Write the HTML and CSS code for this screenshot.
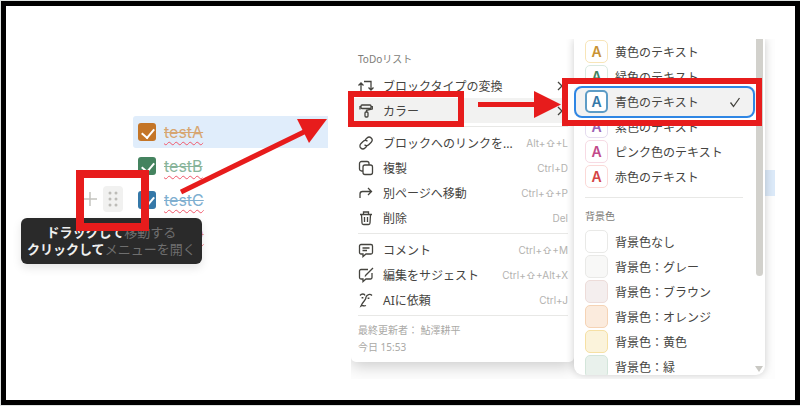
FILE: index.html
```html
<!DOCTYPE html>
<html lang="ja">
<head>
  <meta charset="UTF-8">
  <meta name="viewport" content="width=device-width, initial-scale=1.0">
  <title>ToDoリストのカラー変更</title>
  <link rel="stylesheet" href="styles.css">
</head>
<body>
  <main class="frame">
    <section class="editor">
      <ul class="todos">
        <li class="todo orange active"><input type="checkbox" id="a" checked><label for="a"><s>testA</s></label></li>
        <li class="todo green"><input type="checkbox" id="b" checked><label for="b"><s>testB</s></label></li>
        <li class="todo blue"><input type="checkbox" id="c" checked><label for="c"><s>testC</s></label></li>
        <li class="todo red"><input type="checkbox" id="d" checked><label for="d"><s>testD</s></label></li>
      </ul>
      <div class="block-tools">
        <button type="button" aria-label="追加">
          <svg width="14" height="14" viewBox="0 0 14 14"><path d="M7 0v14M0 7h14" stroke="#c4c3bf" stroke-width="1.5"/></svg>
        </button>
        <button type="button" class="handle" aria-label="メニュー">
          <svg width="10" height="16" viewBox="0 0 10 16" fill="#bdbcb8">
            <circle cx="2" cy="2" r="1.5"/><circle cx="8" cy="2" r="1.5"/>
            <circle cx="2" cy="8" r="1.5"/><circle cx="8" cy="8" r="1.5"/>
            <circle cx="2" cy="14" r="1.5"/><circle cx="8" cy="14" r="1.5"/>
          </svg>
        </button>
      </div>
      <div class="tooltip"><b>ドラックして</b>移動する<br><b>クリックして</b>メニューを開く</div>
      <div class="callout callout-handle"></div>
      <svg class="arrow arrow-long" width="148" height="78" viewBox="0 0 148 78">
        <path d="M1 74L126 13" stroke="#e71c1c" stroke-width="5"/>
        <path d="M117 1h30l-18 24z" fill="#e71c1c"/>
      </svg>
    </section>

    <section class="menus">
      <div class="panel">
        <div class="menu">
          <h2>ToDoリスト</h2>
          <button type="button">
            <svg class="icon" viewBox="0 0 16 16"><path d="M3 14V5M0.500 7.500L3 5l2.500 2.500M6 3.500h7V12M10.500 9.500L13 12l2.500-2.500"/></svg>
            ブロックタイプの変換
            <svg class="chevron" viewBox="0 0 6 10"><path d="M1 1l4 4-4 4"/></svg>
          </button>
          <button type="button" class="hover">
            <svg class="icon" viewBox="0 0 16 16"><rect x="3" y="2" width="10" height="3.500" rx="1"/><path d="M3 3.700H2V6.500M13 3.700h1.300V6L8.500 7.300V9"/><rect x="7" y="9" width="3" height="5" rx="1"/></svg>
            カラー
            <svg class="chevron" viewBox="0 0 6 10"><path d="M1 1l4 4-4 4"/></svg>
          </button>
          <hr>
          <button type="button">
            <svg class="icon" viewBox="0 0 16 16"><path d="M7 5l2-2a2.900 2.900 0 0 1 4.200 4.200L10.700 9.700a2.900 2.900 0 0 1-4.200 0M9 11l-2 2a2.900 2.900 0 0 1-4.200-4.200l2.500-2.500a2.900 2.900 0 0 1 4.200 0"/></svg>
            ブロックへのリンクを...
            <kbd>Alt+⇧+L</kbd>
          </button>
          <button type="button">
            <svg class="icon" viewBox="0 0 16 16"><rect x="5" y="5" width="9.500" height="9.500" rx="2"/><path d="M5 11H3.500a2 2 0 0 1-2-2V3.500a2 2 0 0 1 2-2H9a2 2 0 0 1 2 2V5"/></svg>
            複製
            <kbd>Ctrl+D</kbd>
          </button>
          <button type="button">
            <svg class="icon" viewBox="0 0 16 16"><path d="M2 13V9a2.500 2.500 0 0 1 2.500-2.500h9M10 3l3.500 3.500L10 10"/></svg>
            別ページへ移動
            <kbd>Ctrl+⇧+P</kbd>
          </button>
          <button type="button">
            <svg class="icon" viewBox="0 0 16 16"><path d="M2 4.500h12M5.500 4.500V2h5v2.500M3.500 4.500l.5 8.500a1.500 1.500 0 0 0 1.500 1.500h5A1.500 1.500 0 0 0 12 13l.5-8.500M6.500 7v5M9.500 7v5"/></svg>
            削除
            <kbd>Del</kbd>
          </button>
          <hr>
          <button type="button">
            <svg class="icon" viewBox="0 0 16 16"><path d="M3 2.500h10a1.500 1.500 0 0 1 1.500 1.500v6.500A1.500 1.500 0 0 1 13 12H8l-3 2.500V12H3a1.500 1.500 0 0 1-1.500-1.500V4A1.500 1.500 0 0 1 3 2.500zM4.500 6h7M4.500 8.500H9"/></svg>
            コメント
            <kbd>Ctrl+⇧+M</kbd>
          </button>
          <button type="button">
            <svg class="icon" viewBox="0 0 16 16"><path d="M10 2.500H3A1.500 1.500 0 0 0 1.500 4v6.500A1.500 1.500 0 0 0 3 12h2v2.500L8 12h4.500a1.500 1.500 0 0 0 1.500-1.500V6M15 1L8 8l-1 1.500"/></svg>
            編集をサジェスト
            <kbd>Ctrl+⇧+Alt+X</kbd>
          </button>
          <button type="button">
            <svg class="icon" viewBox="0 0 16 16"><path d="M2 3.500c1.500-2 4.500-2 5 0M8 5c1-2.500 4-3.500 6-1.500M8 5c.5 3-3 4-5 9 1.500-1 3 .5 5-.5"/><path d="M4.500 5v1.500M10.500 5.500V7" stroke-width="1.800"/></svg>
            AIに依頼
            <kbd>Ctrl+J</kbd>
          </button>
          <hr>
          <p>最終更新者： 鮎澤耕平<br>今日 15:53</p>
        </div>

        <div class="menu colors">
          <button type="button"><span class="swatch yellow">A</span>黄色のテキスト</button>
          <button type="button"><span class="swatch green">A</span>緑色のテキスト</button>
          <button type="button" class="selected"><span class="swatch blue">A</span>青色のテキスト
            <svg class="tick" viewBox="0 0 12 12"><path d="M1.500 6.500l3 4L10.500 2"/></svg>
          </button>
          <button type="button"><span class="swatch purple">A</span>紫色のテキスト</button>
          <button type="button"><span class="swatch pink">A</span>ピンク色のテキスト</button>
          <button type="button"><span class="swatch red">A</span>赤色のテキスト</button>
          <hr>
          <h2>背景色</h2>
          <button type="button"><span class="swatch"></span>背景色なし</button>
          <button type="button"><span class="swatch bg-gray"></span>背景色：グレー</button>
          <button type="button"><span class="swatch bg-brown"></span>背景色：ブラウン</button>
          <button type="button"><span class="swatch bg-orange"></span>背景色：オレンジ</button>
          <button type="button"><span class="swatch bg-yellow"></span>背景色：黄色</button>
          <button type="button"><span class="swatch bg-green"></span>背景色：緑</button>
          <span class="scroll-thumb"></span>
          <span class="scroll-down"></span>
        </div>
      </div>
      <div class="callout callout-color"></div>
      <svg class="arrow arrow-short" width="84" height="28" viewBox="0 0 84 28">
        <path d="M0 13.500h58" stroke="#e71c1c" stroke-width="5"/>
        <path d="M56 0v27l27-13.500z" fill="#e71c1c"/>
      </svg>
      <div class="callout callout-blue"></div>
      <div class="selection"></div>
    </section>
  </main>
</body>
</html>
```
FILE: styles.css
```css
* {
  box-sizing: border-box;
}

body {
  margin: 0;
  padding: 1px 0 1px 1px;
  background-color: #dfe3e2;
  font-family: "Noto Sans", "Noto Sans CJK JP", sans-serif;
  font-size: 12px;
  color: #454441;
}

.frame {
  display: flex;
  min-height: calc(100vh - 2px);
  padding: 33px 20px 0 0;
  border: 5px solid #000;
  background-color: #fff;
}

button {
  border: none;
  padding: 0;
  background: none;
  font: inherit;
  color: inherit;
  cursor: pointer;
}

/* Editor */
.editor {
  position: relative;
  flex: 1;
  padding: 77px 23px 0 127px;
}

.todos {
  display: flex;
  flex-direction: column;
  gap: 2px;
  margin: 0;
  padding: 0;
  list-style: none;
}

.todo {
  display: flex;
  align-items: center;
  gap: 8px;
  height: 32px;
  padding-left: 5px;
  border-radius: 3px 0 0 3px;
  font-family: Inter, sans-serif;
  font-size: 16px;
}

.todo.active {
  background-color: #e0edfb;
}

.todo input {
  appearance: none;
  position: relative;
  width: 18px;
  height: 18px;
  margin: 0;
  border-radius: 3px;
  background-color: var(--main);
}

.todo input:checked::before {
  content: "";
  position: absolute;
  left: 6px;
  top: 3px;
  width: 6px;
  height: 10px;
  border: solid #fff;
  border-width: 0 2px 2px 0;
  transform: rotate(40deg);
}

.todo label {
  color: var(--soft);
  text-decoration: underline wavy #f0576a 1px;
  text-underline-offset: 3px;
}

.orange { --main: #c47527; --soft: #d7a671; }
.green { --main: #44835f; --soft: #88b49a; }
.blue { --main: #3578a8; --soft: #7fafd0; }
.red { --main: #d44545; --soft: #e58a8a; }
.yellow { --main: #c99335; }
.purple { --main: #9a62b5; }
.pink { --main: #c24a8a; }

.block-tools {
  position: absolute;
  left: 77px;
  top: 147px;
  display: flex;
  align-items: center;
  gap: 6px;
}

.block-tools button {
  display: flex;
  align-items: center;
  justify-content: center;
  height: 26px;
}

.block-tools .handle {
  width: 20px;
  border-radius: 4px;
  background-color: #f1f1f0;
}

.tooltip {
  position: absolute;
  left: 15px;
  top: 179px;
  padding: 6px;
  border-radius: 6px;
  background-color: #2a2a2a;
  box-shadow: 0 4px 10px rgba(0, 0, 0, 0.1);
  color: #6f6f6f;
  font-size: 13px;
  line-height: 17px;
  text-align: center;
  white-space: nowrap;
}

.tooltip b {
  color: #efefef;
}

/* Menus */
.menus {
  position: relative;
  flex: none;
}

.panel {
  position: relative;
  display: flex;
  align-items: flex-start;
  height: 340px;
  padding-right: 10px;
  overflow: hidden;
  background: linear-gradient(#dbe9f8, #dbe9f8) right 131px / 10px 26px no-repeat #fdfdfd;
}

.menu {
  display: flex;
  flex-direction: column;
  width: 223px;
  border-radius: 0 0 5px 5px;
  background-color: #fff;
  box-shadow: 0 4px 16px rgba(0, 0, 0, 0.2);
}

.menu h2 {
  margin: 0;
  padding: 12px 7px 6px;
  font-size: 10px;
  font-weight: 400;
  line-height: 16px;
  color: #7d7c78;
}

.menu button {
  display: flex;
  flex: none;
  align-items: center;
  gap: 9px;
  height: 25px;
  padding: 0 6px 0 7px;
  white-space: nowrap;
}

.menu .hover {
  background-color: #f2f2f1;
}

.menu hr {
  flex: none;
  height: 1px;
  margin: 3px 6px 3px 7px;
  border: none;
  background-color: #e8e8e6;
}

.menu p {
  margin: 0;
  padding: 3px 7px 6px;
  font-size: 10px;
  line-height: 17px;
  color: #aaa9a6;
}

.menu kbd {
  margin-left: auto;
  font-family: Inter, "DejaVu Sans", sans-serif;
  font-size: 10px;
  color: #b3b2af;
}

.icon,
.chevron,
.tick {
  fill: none;
  stroke: #45443f;
  stroke-width: 1.3;
}

.icon {
  width: 16px;
  height: 16px;
}

.chevron {
  width: 6px;
  height: 10px;
  margin: 0 5px 0 auto;
}

.tick {
  width: 12px;
  height: 12px;
  margin-left: auto;
}

/* Color submenu, scrolled part way down */
.menu.colors {
  position: relative;
  width: 191px;
  height: 336px;
  border-radius: 0 0 9px 9px;
  overflow: hidden;
  box-shadow: 0 0 8px rgba(0, 0, 0, 0.2);
}

.colors button {
  gap: 7px;
  padding: 0 23px 0 11px;
}

.colors hr {
  margin: 8px 22px 0 11px;
}

.colors h2 {
  padding: 10px 11px 5px;
}

.colors .selected {
  margin: 0 12px 0 1px;
  padding: 0 12px 0 10px;
  border-radius: 5px;
  background-color: #f2f2f2;
  box-shadow: 0 0 0 3px #f2f2f2, 0 0 0 8px #fff;
  z-index: 1;
}

.swatch {
  width: 23px;
  height: 23px;
  border: 1px solid #e9e9e7;
  border-radius: 5px;
  background-color: #fff;
  font-family: Inter, sans-serif;
  font-size: 14px;
  font-weight: 600;
  line-height: 21px;
  text-align: center;
  color: var(--main);
}

.swatch.yellow { border-color: #f8e5b8; }
.swatch.green { border-color: #d9e9df; }
.swatch.blue { border: 2px solid #5d9cc6; line-height: 19px; }
.swatch.purple { border-color: #e5dcef; }
.swatch.pink { border-color: #f7dbe4; }
.swatch.red { border-color: #fbd9d7; }
.bg-gray { background-color: #f8f8f7; }
.bg-brown { background-color: #f4eeee; border-color: #eddcd9; }
.bg-orange { background-color: #fbebdd; border-color: #f5d3b5; }
.bg-yellow { background-color: #fbf3db; border-color: #f6e0a4; }
.bg-green { background-color: #e9f1ec; border-color: #d3e5da; }

.scroll-thumb {
  position: absolute;
  right: 2px;
  top: 0;
  width: 7px;
  height: 237px;
  border-radius: 0 0 4px 4px;
  background-color: #d2d1cc;
}

.scroll-down {
  position: absolute;
  right: 2px;
  bottom: 3px;
  border: 4px solid transparent;
  border-top: 6px solid #c9c8c3;
  border-bottom: none;
}

.selection {
  position: absolute;
  left: 223px;
  top: 47px;
  width: 181px;
  height: 32px;
  border: 2px solid #2f86e4;
  border-radius: 8px;
  z-index: 2;
}

/* Red annotations */
.callout {
  position: absolute;
  border: 6px solid #e71c1c;
  z-index: 2;
}

.callout-handle {
  left: 70px;
  top: 131px;
  width: 73px;
  height: 61px;
  border-width: 8px;
}

.callout-color {
  left: -3px;
  top: 52px;
  width: 116px;
  height: 36px;
}

.callout-blue {
  left: 211px;
  top: 39px;
  width: 200px;
  height: 48px;
  box-shadow: inset 6px 0 #fff;
}

.arrow {
  position: absolute;
}

.arrow-long {
  left: 174px;
  top: 79px;
}

.arrow-short {
  left: 127px;
  top: 52px;
}
```
